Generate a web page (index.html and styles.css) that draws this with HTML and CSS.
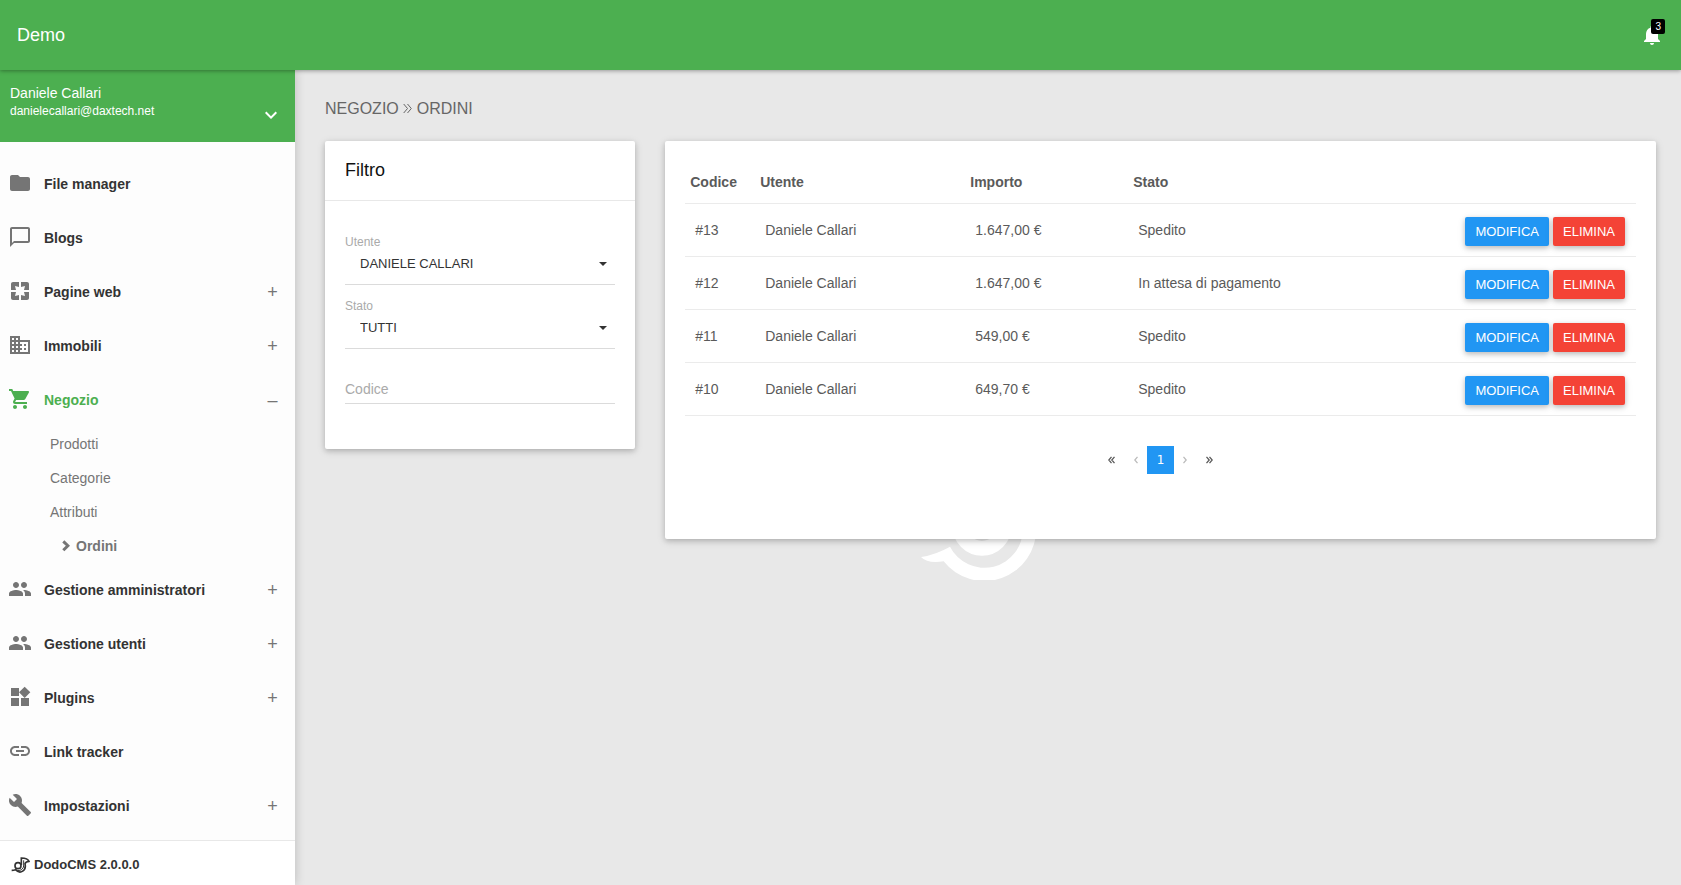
FILE: index.html
```html
<!DOCTYPE html>
<html lang="it">
<head>
<meta charset="utf-8">
<title>DodoCMS - Ordini</title>
<link rel="stylesheet" href="styles.css">
</head>
<body>
<header class="topbar">
  <a class="brand" href="#">Demo</a>
  <button class="bell" type="button" aria-label="Notifiche">
    <svg class="icon" viewBox="0 0 24 24"><path d="M12 22c1.100 0 2-.9 2-2h-4c0 1.100.9 2 2 2zm6-6v-5c0-3.070-1.640-5.640-4.500-6.320V4c0-.83-.67-1.500-1.500-1.500s-1.500.67-1.500 1.500v.68C7.630 5.360 6 7.920 6 11v5l-2 2v1h16v-1l-2-2z"/></svg>
    <span class="badge">3</span>
  </button>
</header>
<div class="layout">
  <aside class="sidebar">
    <div class="profile">
      <div>
        <div class="name">Daniele Callari</div>
        <div class="email">danielecallari@daxtech.net</div>
      </div>
      <button class="expand" type="button" aria-label="Menu profilo">
        <svg class="icon" viewBox="0 0 24 24"><path d="M16.590 8.590L12 13.170 7.410 8.590 6 10l6 6 6-6z"/></svg>
      </button>
    </div>
    <nav class="menu">
      <a class="item" href="#"><svg class="icon" viewBox="0 0 24 24"><path d="M10 4H4c-1.100 0-1.990.9-1.990 2L2 18c0 1.100.9 2 2 2h16c1.100 0 2-.9 2-2V8c0-1.100-.9-2-2-2h-8l-2-2z"/></svg><span class="label">File manager</span></a>
      <a class="item" href="#"><svg class="icon" viewBox="0 0 24 24"><path d="M20 2H4c-1.100 0-2 .9-2 2v18l4-4h14c1.100 0 2-.9 2-2V4c0-1.100-.9-2-2-2zm0 14H6l-2 2V4h16v12z"/></svg><span class="label">Blogs</span></a>
      <a class="item" href="#"><svg class="icon" viewBox="0 0 24 24"><path d="M3 5v6h5L7 7l4 1V3H5c-1.100 0-2 .9-2 2zm5 8H3v6c0 1.100.9 2 2 2h6v-5l-4 1 1-4zm9 4l-4-1v5h6c1.100 0 2-.9 2-2v-6h-5l1 4zm2-14h-6v5l4-1-1 4h5V5c0-1.100-.9-2-2-2z"/></svg><span class="label">Pagine web</span><span class="toggle">+</span></a>
      <a class="item" href="#"><svg class="icon" viewBox="0 0 24 24"><path d="M12 7V3H2v18h20V7H12zM6 19H4v-2h2v2zm0-4H4v-2h2v2zm0-4H4V9h2v2zm0-4H4V5h2v2zm4 12H8v-2h2v2zm0-4H8v-2h2v2zm0-4H8V9h2v2zm0-4H8V5h2v2zm10 12h-8v-2h2v-2h-2v-2h2v-2h-2V9h8v10zm-2-8h-2v2h2v-2zm0 4h-2v2h2v-2z"/></svg><span class="label">Immobili</span><span class="toggle">+</span></a>
      <a class="item active" href="#"><svg class="icon" viewBox="0 0 24 24"><path d="M7 18c-1.100 0-1.990.9-1.990 2S5.900 22 7 22s2-.9 2-2-.9-2-2-2zM1 2v2h2l3.600 7.590-1.350 2.450c-.16.280-.25.610-.25.960 0 1.100.9 2 2 2h12v-2H7.420c-.14 0-.25-.11-.25-.25l.03-.12.900-1.630h7.450c.75 0 1.410-.41 1.750-1.030l3.580-6.490c.08-.14.120-.31.120-.48 0-.55-.45-1-1-1H5.210l-.94-2H1zm16 16c-1.100 0-1.990.9-1.990 2s.89 2 1.990 2 2-.9 2-2-.9-2-2-2z"/></svg><span class="label">Negozio</span><span class="toggle">–</span></a>
      <div class="submenu">
        <a class="sub" href="#">Prodotti</a>
        <a class="sub" href="#">Categorie</a>
        <a class="sub" href="#">Attributi</a>
        <a class="sub current" href="#"><svg class="arrow" viewBox="0 0 8 12"><path d="M1.300 1.300L5.900 5.700 1.300 10.300"/></svg>Ordini</a>
      </div>
      <a class="item" href="#"><svg class="icon" viewBox="0 0 24 24"><path d="M16 11c1.660 0 2.990-1.340 2.990-3S17.660 5 16 5c-1.660 0-3 1.340-3 3s1.340 3 3 3zm-8 0c1.660 0 2.990-1.340 2.990-3S9.660 5 8 5C6.340 5 5 6.340 5 8s1.340 3 3 3zm0 2c-2.330 0-7 1.170-7 3.500V19h14v-2.500c0-2.330-4.670-3.500-7-3.500zm8 0c-.29 0-.62.020-.97.050 1.160.84 1.970 1.970 1.970 3.450V19h6v-2.500c0-2.330-4.670-3.500-7-3.500z"/></svg><span class="label">Gestione amministratori</span><span class="toggle">+</span></a>
      <a class="item" href="#"><svg class="icon" viewBox="0 0 24 24"><path d="M16 11c1.660 0 2.990-1.340 2.990-3S17.660 5 16 5c-1.660 0-3 1.340-3 3s1.340 3 3 3zm-8 0c1.660 0 2.990-1.340 2.990-3S9.660 5 8 5C6.340 5 5 6.340 5 8s1.340 3 3 3zm0 2c-2.330 0-7 1.170-7 3.500V19h14v-2.500c0-2.330-4.670-3.500-7-3.500zm8 0c-.29 0-.62.020-.97.050 1.160.84 1.970 1.970 1.970 3.450V19h6v-2.500c0-2.330-4.670-3.500-7-3.500z"/></svg><span class="label">Gestione utenti</span><span class="toggle">+</span></a>
      <a class="item" href="#"><svg class="icon" viewBox="0 0 24 24"><path d="M13 13v8h8v-8h-8zM3 21h8v-8H3v8zM3 3v8h8V3H3zm13.660-1.310L11 7.340 16.660 13l5.660-5.660-5.660-5.650z"/></svg><span class="label">Plugins</span><span class="toggle">+</span></a>
      <a class="item" href="#"><svg class="icon" viewBox="0 0 24 24"><path d="M3.900 12c0-1.710 1.390-3.100 3.100-3.100h4V7H7c-2.760 0-5 2.240-5 5s2.240 5 5 5h4v-1.900H7c-1.710 0-3.100-1.390-3.100-3.100zM8 13h8v-2H8v2zm9-6h-4v1.900h4c1.710 0 3.100 1.390 3.100 3.100s-1.390 3.100-3.100 3.100h-4V17h4c2.760 0 5-2.240 5-5s-2.240-5-5-5z"/></svg><span class="label">Link tracker</span></a>
      <a class="item" href="#"><svg class="icon" viewBox="0 0 24 24"><path d="M22.700 19l-9.100-9.100c.9-2.300.4-5-1.500-6.900-2-2-5-2.400-7.400-1.300L9 6 6 9 1.600 4.700C.4 7.100.9 10.100 2.900 12.100c1.900 1.900 4.600 2.400 6.900 1.500l9.100 9.100c.4.400 1 .4 1.400 0l2.300-2.300c.5-.4.500-1.100.1-1.400z"/></svg><span class="label">Impostazioni</span><span class="toggle">+</span></a>
    </nav>
    <div class="version">
      <svg class="dodo" viewBox="0 0 57 51"><path d="M2 40Q8 40 14 38C28 54 47 40 42 20Q44 14 54 13C51 5 44 3 31 3V24"/><path d="M38 10V27A17 15 0 0 1 20 41" class="thin"/><circle cx="21" cy="26" r="9"/></svg>
      <span>DodoCMS 2.0.0.0</span>
    </div>
  </aside>
  <main class="content">
    <svg class="watermark" viewBox="0 0 345 315"><g transform="translate(-125 -165)"><path fill="#fff" d="M125 411Q170 404 212 380A115.400 115.400 0 0 0 430.400 325H470.400A155.400 155.400 0 0 1 193 424Q145 432 125 411Z"/><circle cx="308" cy="318" r="67" fill="none" stroke="#fff" stroke-width="44"/></g></svg>
    <h1 class="crumbs">NEGOZIO <svg class="sep" viewBox="0 0 9 11"><path d="M.7 1L4.500 5.500.7 10M4.500 1L8.300 5.500 4.500 10"/></svg> ORDINI</h1>
    <div class="row">
      <div class="col-filter">
        <form class="card">
          <h2 class="card-title">Filtro</h2>
          <div class="filters">
            <div class="field">
              <label for="utente">Utente</label>
              <div class="picker"><select id="utente"><option>DANIELE CALLARI</option></select></div>
            </div>
            <div class="field">
              <label for="stato">Stato</label>
              <div class="picker"><select id="stato"><option>TUTTI</option></select></div>
            </div>
            <input class="text" type="text" placeholder="Codice" aria-label="Codice">
          </div>
        </form>
      </div>
      <div class="col-list">
        <section class="card orders">
          <table>
            <thead><tr><th class="c-code">Codice</th><th class="c-user">Utente</th><th class="c-total">Importo</th><th>Stato</th><th></th></tr></thead>
            <tbody>
              <tr><td>#13</td><td>Daniele Callari</td><td>1.647,00 €</td><td>Spedito</td><td class="actions"><button class="btn edit" type="button">MODIFICA</button><button class="btn delete" type="button">ELIMINA</button></td></tr>
              <tr><td>#12</td><td>Daniele Callari</td><td>1.647,00 €</td><td>In attesa di pagamento</td><td class="actions"><button class="btn edit" type="button">MODIFICA</button><button class="btn delete" type="button">ELIMINA</button></td></tr>
              <tr><td>#11</td><td>Daniele Callari</td><td>549,00 €</td><td>Spedito</td><td class="actions"><button class="btn edit" type="button">MODIFICA</button><button class="btn delete" type="button">ELIMINA</button></td></tr>
              <tr><td>#10</td><td>Daniele Callari</td><td>649,70 €</td><td>Spedito</td><td class="actions"><button class="btn edit" type="button">MODIFICA</button><button class="btn delete" type="button">ELIMINA</button></td></tr>
            </tbody>
          </table>
          <nav class="pages" aria-label="Pagine">
            <a href="#" aria-label="Prima"><svg class="double" viewBox="0 0 7 8"><path d="M3.500.8L.8 4l2.700 3.200M6.500.8L3.800 4l2.700 3.200"/></svg></a>
            <a class="off" href="#" aria-label="Precedente"><svg class="single" viewBox="0 0 4 8"><path d="M3.500.8L.8 4l2.700 3.200"/></svg></a>
            <a class="on" href="#">1</a>
            <a class="off" href="#" aria-label="Successiva"><svg class="single" viewBox="0 0 4 8"><path d="M.5.8L3.200 4 .5 7.200"/></svg></a>
            <a href="#" aria-label="Ultima"><svg class="double" viewBox="0 0 7 8"><path d="M.5.8L3.200 4 .5 7.200M3.500.8L6.200 4 3.500 7.200"/></svg></a>
          </nav>
        </section>
      </div>
    </div>
  </main>
</div>
</body>
</html>
```
FILE: styles.css
```css
* { box-sizing: border-box; }
body {
  margin: 0;
  min-height: 100vh;
  display: flex;
  flex-direction: column;
  background: #e8e8e8;
  color: #5a5a5a;
  font: 14px/20px "Liberation Sans", Arial, sans-serif;
}
a { color: inherit; text-decoration: none; }
button { border: 0; padding: 0; background: none; font: inherit; cursor: pointer; }
.icon { display: block; width: 24px; height: 24px; fill: currentColor; flex: none; }

.topbar {
  position: relative;
  z-index: 2;
  display: flex;
  align-items: center;
  justify-content: space-between;
  height: 70px;
  padding: 0 17px;
  background: #4caf50;
  color: #fff;
  box-shadow: 0 1px 4px rgba(0, 0, 0, .35);
}
.brand { font-size: 18px; }
.bell { position: relative; color: #fff; }
.badge {
  position: absolute;
  top: -4px;
  right: -1px;
  padding: 0 4px;
  border-radius: 2px;
  background: #000;
  font-size: 10px;
  line-height: 15px;
}

.layout { flex: 1; display: flex; }
.sidebar {
  position: relative;
  z-index: 1;
  flex: none;
  display: flex;
  flex-direction: column;
  width: 295px;
  background: #fdfdfd;
  box-shadow: 0 0 10px rgba(0, 0, 0, .2);
}
.profile {
  display: flex;
  justify-content: space-between;
  height: 72px;
  padding: 14px 12px 15px 10px;
  background: #4caf50;
  color: #fff;
}
.name { line-height: 18px; }
.email { font-size: 12px; line-height: 18px; }
.expand { align-self: flex-end; color: #fff; }

.menu { flex: 1; padding-top: 15px; color: #757575; }
.item { display: flex; align-items: center; height: 54px; padding: 0 17px 2px 8px; }
.label { flex: 1; padding: 2px 0 0 12px; color: #333; font-weight: bold; }
.active .icon, .active .label { color: #4caf50; }
.toggle { width: 11px; padding-top: 2px; font-size: 18px; text-align: center; }
.sub { display: flex; align-items: center; height: 34px; padding-left: 50px; }
.current { gap: 6px; padding-left: 62px; font-weight: bold; }
.arrow { width: 8px; height: 12px; fill: none; stroke: currentColor; stroke-width: 3; }
.version {
  display: flex;
  align-items: center;
  gap: 4px;
  height: 45px;
  padding: 4px 0 0 11px;
  border-top: 1px solid #e8e8e8;
  background: #fff;
  color: #333;
  font-size: 13px;
  font-weight: bold;
}
.dodo { width: 19px; height: 17px; fill: none; stroke: currentColor; stroke-width: 5; }
.dodo .thin { stroke-width: 3; }

.content { position: relative; flex: 1; min-width: 0; padding: 29px 25px 28px 30px; }
.watermark { position: absolute; top: 405px; left: 626px; width: 115px; height: 105px; }
.crumbs { margin: 0 0 22px; color: #666; font-size: 16px; font-weight: normal; line-height: 20px; }
.sep { width: 9px; height: 11px; fill: none; stroke: currentColor; }
.row { position: relative; display: flex; align-items: flex-start; margin: 0 -15px; }
.col-filter { flex: 0 0 25%; padding: 0 15px; }
.col-list { flex: 0 0 75%; padding: 0 15px; }
.card {
  border-radius: 2px;
  background: #fff;
  box-shadow: 0 2px 5px rgba(0, 0, 0, .16), 0 2px 10px rgba(0, 0, 0, .12);
}
.card-title {
  margin: 0;
  padding: 17px 20px 18px;
  border-bottom: 1px solid #e8e8e8;
  color: #111;
  font-size: 18px;
  font-weight: normal;
  line-height: 24px;
}
.filters { padding: 33px 20px 45px; }
.field { margin-bottom: 13px; }
.field label { display: block; color: #aaa; font-size: 12px; line-height: 16px; }
.picker { position: relative; border-bottom: 1px solid #dbdbdb; padding-bottom: 8px; }
.picker::after {
  content: "";
  position: absolute;
  top: 12px;
  right: 8px;
  border: 4px solid transparent;
  border-top-color: #333;
  border-bottom: 0;
  pointer-events: none;
}
.picker select {
  appearance: none;
  display: block;
  width: 100%;
  height: 26px;
  padding: 0 15px;
  border: 0;
  background: none;
  color: #333;
  font: 13px "Liberation Sans", Arial, sans-serif;
}
.text {
  display: block;
  width: 100%;
  height: 25px;
  margin-top: 30px;
  padding: 0 0 4px;
  border: 0;
  border-bottom: 1px solid #dbdbdb;
  background: none;
  font: inherit;
}
.text::placeholder { color: #aaa; opacity: 1; }

.orders { padding: 20px 20px 65px; }
table { width: 100%; border-collapse: separate; border-spacing: 0; text-align: left; }
th { padding: 11px 5px; border-bottom: 1px solid #ebebeb; }
td { padding: 11px 10px; border-bottom: 1px solid #ebebeb; }
.c-code { width: 70px; }
.c-user { width: 210px; }
.c-total { width: 163px; }
.actions { padding: 13px 11px 10px; text-align: right; font-size: 0; }
.btn {
  margin-left: 4px;
  padding: 5px 10px;
  border-radius: 2px;
  color: #fff;
  font-size: 13px;
  line-height: 19px;
  box-shadow: 0 2px 5px rgba(0, 0, 0, .2), 0 2px 8px rgba(0, 0, 0, .1);
}
.edit { background: #2196f3; }
.delete { background: #f44336; }

.pages {
  display: flex;
  justify-content: center;
  margin-top: 30px;
  font: 12px/28px "DejaVu Sans", sans-serif;
}
.pages a { display: flex; align-items: center; padding: 0 10px; }
.pages .off { padding: 0 9px; color: #bbb; }
.pages .on { background: #2196f3; color: #fff; }
.pages svg { height: 8px; fill: none; stroke: currentColor; stroke-width: 1.3; }
.double { width: 7px; }
.single { width: 4px; }
```
